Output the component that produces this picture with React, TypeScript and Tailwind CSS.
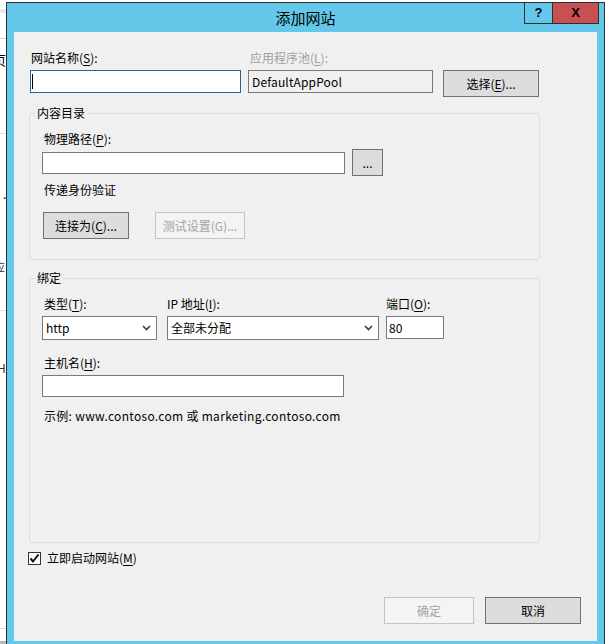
import type { ReactNode } from "react";

const font = "font-['Noto_Sans_CJK_SC','Noto_Sans',sans-serif]";

function Key({ children }: { children: ReactNode }) {
  return <span className="underline underline-offset-[2px]">{children}</span>;
}

function Button({
  children,
  width,
  disabled,
}: {
  children: ReactNode;
  width: string;
  disabled?: boolean;
}) {
  return (
    <button
      type="button"
      className={`${width} flex h-[27px] shrink-0 items-center justify-center border text-[12px] leading-[16px] ${
        disabled
          ? "border-[#c4c4c4] bg-[#f4f4f4] text-[#a3a3a3]"
          : "border-[#707070] bg-[#dddddd] text-black"
      }`}
    >
      {children}
    </button>
  );
}

function Chevron() {
  return (
    <svg width="9" height="6" viewBox="0 0 9 6" className="shrink-0">
      <polyline
        points="1,1 4.5,4.5 8,1"
        fill="none"
        stroke="#404040"
        strokeWidth="1.7"
      />
    </svg>
  );
}

function Select({ value, width }: { value: string; width: string }) {
  return (
    <div
      className={`${width} flex h-[24px] items-center justify-between border border-[#7a7a7a] bg-white pl-[3px] pr-[5px]`}
    >
      <span className="leading-[16px]">{value}</span>
      <Chevron />
    </div>
  );
}

// sliver of the window behind the dialog
function BehindWindow() {
  return (
    <div className="relative h-full w-[6px] shrink-0 overflow-hidden bg-white">
      <div className="absolute left-0 top-[9px] h-[4px] w-full bg-[#e3ecf5]" />
      <div className="absolute left-0 top-[38px] h-px w-full bg-[#d4d4d4]" />
      <span className="absolute left-[-7px] top-[52px] text-[13px] leading-[16px] text-black">
        页
      </span>
      <div className="absolute left-0 top-[133px] h-px w-full bg-[#e2e2e2]" />
      <span className="absolute left-[3px] top-[188px] text-[12px] leading-[12px]">.</span>
      <span className="absolute left-[-7px] top-[259px] text-[12px] leading-[16px] text-[#333]">
        应
      </span>
      <div className="absolute left-0 top-[310px] h-px w-full bg-[#e2e2e2]" />
      <span className="absolute left-[-3px] top-[360px] text-[12px] leading-[16px] text-[#333]">
        H
      </span>
      <div className="absolute left-0 top-[628px] h-px w-full bg-[#d8d8d8]" />
      <div className="absolute left-0 top-[641px] h-[3px] w-full bg-[#b9b9b9]" />
    </div>
  );
}

export default function App() {
  return (
    <div
      className={`${font} flex h-[644px] w-[605px] overflow-hidden bg-white text-[12px] text-black`}
    >
      <BehindWindow />

      <div className="mt-[2px] flex h-[645px] w-[599px] shrink-0 flex-col border-x border-t border-[#2e2e2e] bg-[#64c8ea]">
        {/* title bar */}
        <div className="grid h-[29px] shrink-0 grid-cols-[1fr_auto_1fr]">
          <div />
          <div className="text-[15px] leading-[29px]">添加网站</div>
          <div className="-mt-px flex items-start justify-end pr-[5px]">
            <div className="flex h-[22px] w-[29px] items-center justify-center border border-[#2e2e2e] font-['Liberation_Sans',sans-serif] text-[13px] font-bold">
              ?
            </div>
            <div className="flex h-[22px] w-[46px] items-center justify-center border-y border-r border-[#2e2e2e] bg-[#c75050] font-['Liberation_Sans',sans-serif] text-[13px] font-bold">
              X
            </div>
          </div>
        </div>

        {/* client area */}
        <div className="mx-[7px] flex h-[609px] shrink-0 flex-col bg-[#f0f0f0]">
          {/* site name / app pool */}
          <div className="flex pl-[16px] pt-[18px]">
            <div className="flex w-[211px] flex-col">
              <label className="pl-px leading-[16px]">
                网站名称(<Key>S</Key>):
              </label>
              <div className="mt-[4px] flex h-[23px] items-center border border-[#2c628b] bg-white pl-[1px]">
                <span className="h-[15px] w-px bg-black" />
              </div>
            </div>
            <div className="ml-[7px] flex w-[185px] flex-col">
              <label className="pl-[2px] leading-[16px] text-[#a0a0a0]">
                应用程序池(<Key>L</Key>):
              </label>
              <div className="mt-[4px] flex h-[23px] items-center border border-[#7a7a7a] bg-[#f0f0f0] pl-[3px] leading-[16px] tracking-[0.15px]">
                DefaultAppPool
              </div>
            </div>
            <div className="ml-[10px] pt-[20px]">
              <Button width="w-[96px]">
                选择(<Key>E</Key>)...
              </Button>
            </div>
          </div>

          {/* content directory */}
          <fieldset className="ml-[15px] mt-[8px] w-[511px] rounded-[3px] border border-[#d5dfe5] p-0">
            <legend className="ml-[5px] px-[2px] leading-[16px]">内容目录</legend>
            <div className="flex flex-col pb-[20px] pl-[12px] pt-[10px]">
              <label className="pl-[2px] leading-[16px]">
                物理路径(<Key>P</Key>):
              </label>
              <div className="mt-[2px] flex items-center gap-[7px]">
                <div className="h-[22px] w-[303px] border border-[#7a7a7a] bg-white" />
                <Button width="w-[31px]">...</Button>
              </div>
              <div className="mt-[6px] pl-[2px] leading-[16px]">传递身份验证</div>
              <div className="mt-[14px] flex gap-[26px] pl-px">
                <Button width="w-[86px]">
                  连接为(<Key>C</Key>)...
                </Button>
                <Button width="w-[90px]" disabled>
                  测试设置(G)...
                </Button>
              </div>
            </div>
          </fieldset>

          {/* bindings */}
          <fieldset className="ml-[15px] mt-[10px] w-[511px] rounded-[3px] border border-[#d5dfe5] p-0">
            <legend className="ml-[5px] px-[2px] leading-[16px]">绑定</legend>
            <div className="flex h-[256px] flex-col pl-[12px] pt-[10px]">
              <div className="flex">
                <div className="flex w-[115px] flex-col">
                  <label className="pl-[2px] leading-[16px]">
                    类型(<Key>T</Key>):
                  </label>
                  <div className="mt-[4px]">
                    <Select value="http" width="w-[115px]" />
                  </div>
                </div>
                <div className="ml-[10px] flex w-[212px] flex-col">
                  <label className="leading-[16px]">
                    IP 地址(<Key>I</Key>):
                  </label>
                  <div className="mt-[4px]">
                    <Select value="全部未分配" width="w-[212px]" />
                  </div>
                </div>
                <div className="ml-[7px] flex w-[58px] flex-col">
                  <label className="leading-[16px]">
                    端口(<Key>O</Key>):
                  </label>
                  <div className="mt-[4px] flex h-[23px] items-center border border-[#7a7a7a] bg-white pl-[2px] leading-[16px]">
                    80
                  </div>
                </div>
              </div>
              <label className="mt-[15px] pl-[2px] leading-[16px]">
                主机名(<Key>H</Key>):
              </label>
              <div className="mt-[4px] h-[22px] w-[302px] border border-[#7a7a7a] bg-white" />
              <div className="mt-[11px] pl-[2px] leading-[16px] tracking-[0.3px]">
                示例: www.contoso.com 或 marketing.contoso.com
              </div>
            </div>
          </fieldset>

          {/* start immediately */}
          <div className="mt-[7px] flex items-center pl-[14px]">
            <span className="flex h-[13px] w-[13px] items-center justify-center border border-[#333333] bg-white">
              <svg width="11" height="11" viewBox="0 0 11 11">
                <polyline
                  points="1.5,5.5 4,8.5 9.5,1.5"
                  fill="none"
                  stroke="#111"
                  strokeWidth="2"
                />
              </svg>
            </span>
            <span className="ml-[6px] leading-[16px]">
              立即启动网站(<Key>M</Key>)
            </span>
          </div>

          {/* dialog buttons */}
          <div className="mt-auto flex justify-end gap-[11px] pb-[17px] pr-[16px]">
            <Button width="w-[90px]" disabled>
              确定
            </Button>
            <Button width="w-[96px]">取消</Button>
          </div>
        </div>
      </div>
    </div>
  );
}
